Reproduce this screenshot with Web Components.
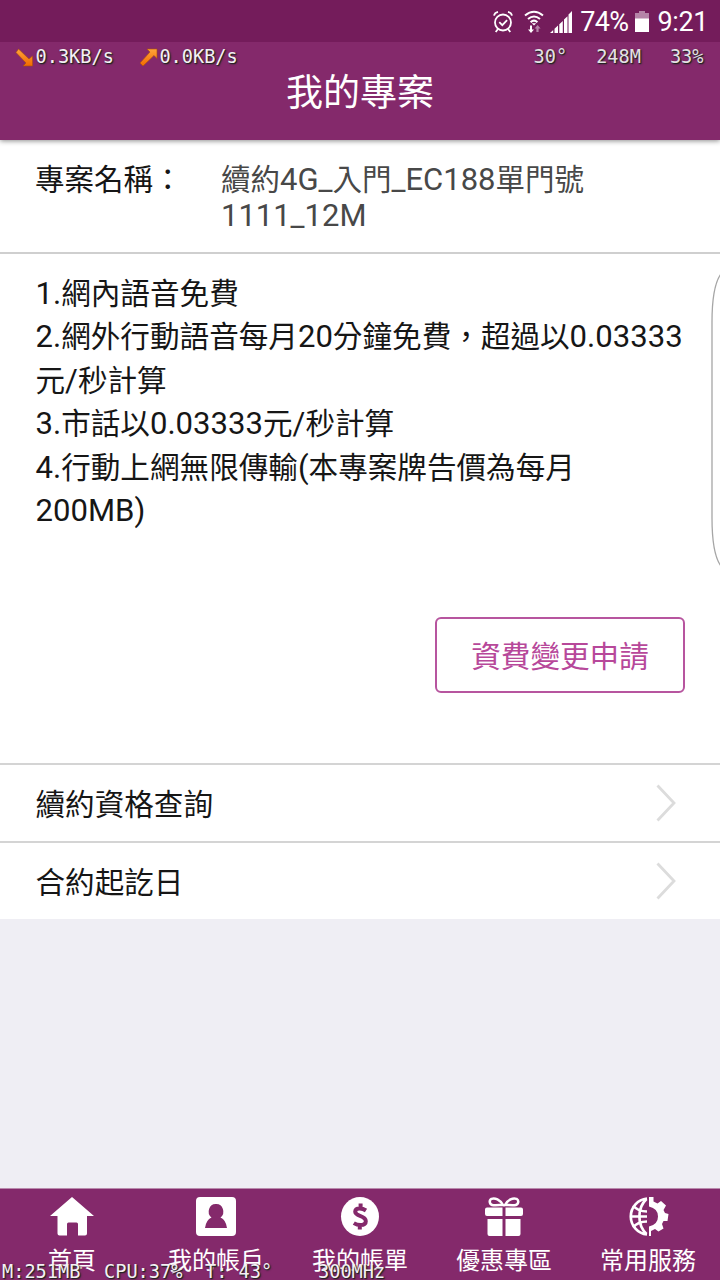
<!DOCTYPE html>
<html lang="zh-Hant">
<head>
<meta charset="utf-8">
<title>我的專案</title>
<style>
	body {
		margin: 0;
		font-family: Roboto, "Noto Sans CJK TC", sans-serif;
	}
</style>
</head>
<body>
	<plan-page>
		<status-bar slot="top" battery="74%" time="9:21"></status-bar>
		<app-header slot="top">我的專案</app-header>

		<plan-name label="專案名稱：">
			<mixed-text>續約4G_入門_EC188單門號</mixed-text>
			<mixed-text>1111_12M</mixed-text>
		</plan-name>
		<plan-details>
			<mixed-text>1.網內語音免費</mixed-text>
			<mixed-text>2.網外行動語音每月20分鐘免費，超過以0.03333</mixed-text>
			<mixed-text>元/秒計算</mixed-text>
			<mixed-text>3.市話以0.03333元/秒計算</mixed-text>
			<mixed-text>4.行動上網無限傳輸(本專案牌告價為每月</mixed-text>
			<mixed-text>200MB)</mixed-text>
			<outline-button slot="action">資費變更申請</outline-button>
		</plan-details>
		<link-row>續約資格查詢</link-row>
		<link-row>合約起訖日</link-row>

		<tab-bar slot="bottom">
			<tab-item icon="home">首頁</tab-item>
			<tab-item icon="account">我的帳戶</tab-item>
			<tab-item icon="bill">我的帳單</tab-item>
			<tab-item icon="gift">優惠專區</tab-item>
			<tab-item icon="service">常用服務</tab-item>
		</tab-bar>
		<system-monitor slot="overlay"></system-monitor>
		<edge-handle slot="overlay"></edge-handle>
	</plan-page>

<script>
	function addShadow(el, html) {
		const template = document.createElement("template");
		template.innerHTML = html;
		const root = el.attachShadow({ mode: "open" });
		root.appendChild(template.content.cloneNode(true));
		return root;
	}

	// Page frame: top bars, scrolling content, bottom tabs
	class PlanPage extends HTMLElement {
		constructor() {
			super();
			addShadow(this, `
			<style>
				:host {
					position: relative;
					display: flex;
					flex-direction: column;
					width: 720px;
					height: 1280px;
					overflow: hidden;
					background: #efeef4;
				}
				main { flex: 1; }
			</style>
			<slot name="top"></slot>
			<main><slot></slot></main>
			<slot name="bottom"></slot>
			<slot name="overlay"></slot>`);
		}
	}

	// Latin runs are set slightly larger than the Chinese ones
	class MixedText extends HTMLElement {
		constructor() {
			super();
			const html = this.textContent.trim().replace(/[\x21-\x7e]+/g, "<span>$&</span>");
			addShadow(this, `
			<style>
				:host { display: block; white-space: nowrap; }
				span { font-size: 1.05em; line-height: 0; }
			</style>
			<div>${html}</div>`);
		}
	}

	class StatusBar extends HTMLElement {
		constructor() {
			super();
			addShadow(this, `
			<style>
				:host {
					position: relative;
					z-index: 1;
					display: flex;
					align-items: center;
					justify-content: flex-end;
					box-sizing: border-box;
					height: 42px;
					padding: 2px 12px 0 0;
					background: #741c5b;
					color: #fff;
					font-size: 27px;
				}
				svg { display: block; flex: none; }
				.alarm { margin-right: 11px; }
				.wifi { margin-right: 6px; }
				.signal { margin-right: 8px; }
				.battery { margin: 0 9px 0 6px; }
				span { line-height: 38px; }
				.level { letter-spacing: -.6px; }
				.time { letter-spacing: -.4px; }
			</style>
			<svg class="alarm" width="20" height="24" viewBox="0 0 20 24" fill="none" stroke="#fff" stroke-width="1.8">
				<circle cx="10" cy="12.5" r="8"/>
				<path d="M6.3 12.2l3 3 4.8-5M1 5.6Q1.6 2.6 5 1.8M19 5.6Q18.4 2.6 15 1.8M5 19l-2.3 3M15 19l2.3 3"/>
			</svg>
			<svg class="wifi" width="20" height="24" viewBox="0 0 20 24" fill="none" stroke="#fff" stroke-width="2">
				<path d="M1 5.5Q10-2 19 5.5M4 9Q10 4 16 9M6.6 12.200Q10 9 13.400 12.200"/>
				<path d="M10 15.500l-2.200-2.300h4.400z" fill="#fff" stroke="none"/>
				<path d="M6 15.500v4H4l3 3.500 3-3.500H8v-4z" fill="#fff" stroke="none"/>
				<path d="M12.400 22v-3.500H10.600l3-3.500 3 3.500h-2V22z" fill="#b584a8" stroke="none"/>
			</svg>
			<svg class="signal" width="22" height="24" viewBox="0 0 22 24" fill="#fff">
				<path d="M0 23h3.200v-3zM4.500 23h3.500v-7.500l-3.500 3.300zM9.300 23h3.500v-12l-3.500 3.300zM14 23h3.500V6.300L14 9.600zM18.500 23H22V1l-3.500 3.500z"/>
			</svg>
			<span class="level">${this.getAttribute("battery")}</span>
			<svg class="battery" width="14" height="22" viewBox="0 0 14 22">
				<path d="M4 0h6v2h4v6H0V2h4z" fill="#b584a8"/>
				<path d="M0 7.500h14V21H0z" fill="#fff"/>
			</svg>
			<span class="time">${this.getAttribute("time")}</span>`);
		}
	}

	class AppHeader extends HTMLElement {
		constructor() {
			super();
			addShadow(this, `
			<style>
				:host {
					position: relative;
					display: block;
					height: 98px;
					background: #84296b;
					color: #fff;
					text-align: center;
					box-shadow: 0 1px 5px rgba(0, 0, 0, .45);
				}
				h1 {
					margin: 0;
					padding-top: 27px;
					font-size: 37px;
					font-weight: 400;
					line-height: 50px;
				}
			</style>
			<h1><slot></slot></h1>`);
		}
	}

	class PlanName extends HTMLElement {
		constructor() {
			super();
			addShadow(this, `
			<style>
				:host {
					display: grid;
					grid-template-columns: 186px 1fr;
					box-sizing: border-box;
					height: 114px;
					padding: 22px 36px 0 35px;
					background: #fff;
					border-bottom: 2px solid #cfcfcf;
					font-size: 29.5px;
					line-height: 36px;
					color: #161616;
				}
				.value { color: #484848; }
			</style>
			<div>${this.getAttribute("label")}</div>
			<div class="value"><slot></slot></div>`);
		}
	}

	class PlanDetails extends HTMLElement {
		constructor() {
			super();
			addShadow(this, `
			<style>
				:host {
					display: flex;
					flex-direction: column;
					box-sizing: border-box;
					height: 509px;
					padding: 19px 35px 0 35.5px;
					background: #fff;
					font-size: 29.6px;
					line-height: 43.4px;
					color: #161616;
				}
				.action {
					display: flex;
					justify-content: flex-end;
					margin-top: 83.500px;
				}
			</style>
			<div><slot></slot></div>
			<div class="action"><slot name="action"></slot></div>`);
		}
	}

	class OutlineButton extends HTMLElement {
		constructor() {
			super();
			addShadow(this, `
			<style>
				:host { display: block; }
				button {
					display: block;
					box-sizing: border-box;
					width: 250px;
					height: 76px;
					padding: 5px 0 0;
					border: 2px solid #b7559f;
					border-radius: 6px;
					background: #fff;
					color: #b7489a;
					font: inherit;
				}
			</style>
			<button><slot></slot></button>`);
		}
	}

	class LinkRow extends HTMLElement {
		constructor() {
			super();
			addShadow(this, `
			<style>
				:host {
					display: flex;
					align-items: center;
					justify-content: space-between;
					box-sizing: border-box;
					height: 78px;
					padding: 0 44px 0 35.5px;
					border-top: 2px solid #d4d4d4;
					background: #fff;
					font-size: 29.6px;
					color: #161616;
				}
				span { padding-bottom: 2px; }
			</style>
			<span><slot></slot></span>
			<svg width="20" height="38" viewBox="0 0 20 38" fill="none" stroke="#dcdcdc" stroke-width="2.8">
				<path d="M1.500 1.500L18 19 1.500 36.500"/>
			</svg>`);
		}
	}

	class TabBar extends HTMLElement {
		constructor() {
			super();
			addShadow(this, `
			<style>
				:host {
					display: grid;
					grid-template-columns: repeat(5, 1fr);
					box-sizing: border-box;
					height: 92px;
					border-top: 1px solid #b98aad;
					background: #84296b;
					color: #fff;
				}
			</style>
			<slot></slot>`);
		}
	}

	const tabIcons = {
		home: `<path d="M22 1L44 20h-7v17.500q0 2-2 2h-7V28q0-1.500-1.500-1.500h-8Q17 26.500 17 28v11.500H9.500q-2 0-2-2V20H0z"/>`,
		account: `<path fill-rule="evenodd" d="M6 1h32q4 0 4 4v31q0 4-4 4H6q-4 0-4-4V5q0-4 4-4zM22 8a7 7.500 0 0 0-4.500 13.500q-5.500 2.500-6.500 10.500h22q-1-8-6.500-10.500a7 7.500 0 0 0-4.500-13.500z"/>`,
		bill: `<ellipse cx="22" cy="20.500" rx="19" ry="19.500"/>
			<path d="M28 14.500Q25 12.500 21.800 12.500q-4.600 0-4.600 3.300 0 2.300 4.800 4 5.800 2 5.800 5.400 0 3.800-5.300 3.800-3.500 0-6.700-1.900M22.600 7.500v5M21.800 28v5.500" fill="none" stroke="#84296b" stroke-width="4"/>`,
		gift: `<g fill="none" stroke="#fff" stroke-width="2.500">
				<path d="M21 9C18 3.500 13 1.500 9.500 2.800c-3 2-2 6 2 6.400 4 .2 6.500-.2 9.500-.2z"/>
				<path d="M23 9C26 3.500 31 1.500 34.500 2.800c3 2 2 6-2 6.400-4 .2-6.500-.2-9.500-.2z"/>
			</g>
			<path d="M5 11.500h15.500V20H5q-2 0-2-2v-4.500q0-2 2-2zM23.500 11.500H39q2 0 2 2V18q0 2-2 2H23.500zM5.500 23h15v17h-13q-2 0-2-2zM23.500 23h15v15q0 2-2 2h-13z"/>`,
		service: `<g fill="none" stroke="#fff" stroke-width="2.700">
				<path d="M21 2.500a18.100 18.100 0 0 0 0 36M20.500 3C11 12 11 29 20.500 38M3.500 20.500H21M7 9.500q5 6 14 6M7 31.500q5-6 14-6"/>
			</g>
			<path d="M23 1h4.500v4.500l4 2 3.500-2.500 5 4.500-2.500 4.500 1.500 3 3.500 1-1 7h-4l-1.500 3 1.500 4.500-5 3-3.500-2.500-4 2v5H23V30.500q9-2 9-10T23 10.500z"/>`
	};

	class TabItem extends HTMLElement {
		constructor() {
			super();
			addShadow(this, `
			<style>
				:host {
					display: flex;
					flex-direction: column;
					align-items: center;
					padding-top: 7px;
					font-size: 24px;
					line-height: 34px;
				}
				svg { display: block; margin-bottom: 7px; }
				span { white-space: nowrap; }
			</style>
			<svg width="44" height="41" viewBox="0 0 44 41" fill="#fff">${tabIcons[this.getAttribute("icon")]}</svg>
			<span><slot></slot></span>`);
		}
	}

	// System readouts floating over the top and bottom bars
	class SystemMonitor extends HTMLElement {
		constructor() {
			super();
			addShadow(this, `
			<style>
				:host {
					position: absolute;
					inset: 0;
					z-index: 2;
					pointer-events: none;
					font: 18.6px/22px "DejaVu Sans Mono", monospace;
					color: #e4e0e4;
					text-shadow: 1px 1px 1px #222, 1px 1px 2px #333;
					white-space: pre;
				}
				.net, .stats, .cpu { position: absolute; display: flex; align-items: center; }
				.net { left: 15px; top: 46px; gap: 25px; color: #f4f0f4; }
				.net span { display: flex; align-items: center; gap: 1.5px; }
				.stats { right: 16.5px; top: 46px; gap: 29px; }
				.cpu { left: 2px; top: 1261px; color: #f4f0f4; }
				.cpu span:nth-child(1) { width: 102px; }
				.cpu span:nth-child(2) { width: 101px; }
				.cpu span:nth-child(3) { width: 113px; }
			</style>
			<div class="net">
				<span><svg width="19" height="19" viewBox="0 0 19 19">
					<defs><linearGradient id="down" x2="0" y2="1"><stop stop-color="#ffa43a"/><stop offset="1" stop-color="#f26a00"/></linearGradient></defs>
					<path d="M3.500 1L14 11l3.500-3v10H8l3-3L1 4.500z" fill="url(#down)" stroke="#a9500c" stroke-width=".6"/>
				</svg>0.3KB/s</span>
				<span><svg width="19" height="19" viewBox="0 0 19 19">
					<defs><linearGradient id="up" x2="0" y2="1"><stop stop-color="#ffa43a"/><stop offset="1" stop-color="#f26a00"/></linearGradient></defs>
					<path d="M1 15L11 4 8 1h10v9.500l-3-3L4 18z" fill="url(#up)" stroke="#a9500c" stroke-width=".6"/>
				</svg>0.0KB/s</span>
			</div>
			<div class="stats"><span>30°</span><span>248M</span><span>33%</span></div>
			<div class="cpu"><span>M:251MB</span><span>CPU:37%</span><span>T: 43°</span><span>300MHz</span></div>`);
		}
	}

	class EdgeHandle extends HTMLElement {
		constructor() {
			super();
			addShadow(this, `
			<style>
				:host { position: absolute; right: 0; top: 272px; }
				svg { display: block; }
			</style>
			<svg width="10" height="296" viewBox="0 0 10 296">
				<path d="M10.500 2.500Q2 15 2 50V246Q2 281 10.500 293.500" fill="#fff" stroke="#a6a6a6" stroke-width="1.300"/>
			</svg>`);
		}
	}

	customElements.define("plan-page", PlanPage);
	customElements.define("mixed-text", MixedText);
	customElements.define("status-bar", StatusBar);
	customElements.define("app-header", AppHeader);
	customElements.define("plan-name", PlanName);
	customElements.define("plan-details", PlanDetails);
	customElements.define("outline-button", OutlineButton);
	customElements.define("link-row", LinkRow);
	customElements.define("tab-bar", TabBar);
	customElements.define("tab-item", TabItem);
	customElements.define("system-monitor", SystemMonitor);
	customElements.define("edge-handle", EdgeHandle);
</script>
</body>
</html>
